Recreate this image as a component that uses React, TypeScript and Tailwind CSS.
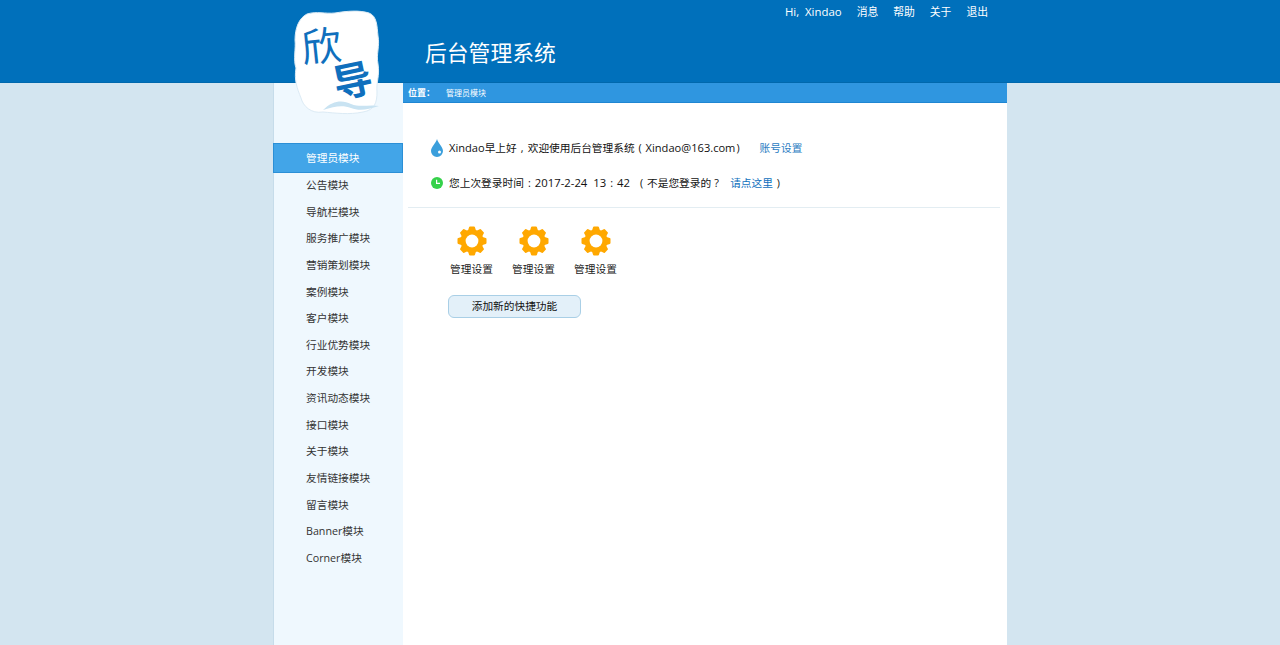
import React from 'react';

const FONT = "font-['Open_Sans','Noto_Sans_CJK_SC',sans-serif]";

const navItems = [
  '公告模块',
  '导航栏模块',
  '服务推广模块',
  '营销策划模块',
  '案例模块',
  '客户模块',
  '行业优势模块',
  '开发模块',
  '资讯动态模块',
  '接口模块',
  '关于模块',
  '友情链接模块',
  '留言模块',
  'Banner模块',
  'Corner模块'
];

function Logo() {
  return (
    <div className="absolute z-10 left-[20px] top-[10px] w-[88px] h-[106px]">
      <svg viewBox="0 0 88 106" className="absolute inset-0 w-full h-full">
        <path
          d="M14 4 C24 1 32 4 42 3 C54 1 66 0 76 3 C84 6 84 16 85 26 C87 36 83 44 85 54 C87 66 83 72 84 82 C84 92 82 100 70 102 C56 105 42 103 30 102 C18 104 10 96 8 88 C4 78 1 70 3 58 C0 50 3 38 2 30 C2 18 6 8 14 4 Z"
          fill="#ffffff"
          stroke="#dcebf5"
          strokeWidth="1"
        />
        <path
          d="M30 100 C40 90 50 90 58 94 C68 98 76 94 86 96 C74 100 66 101 58 98 C50 95 42 96 30 100 Z"
          fill="#c9e3f2"
        />
      </svg>
      <span className="absolute left-[8px] top-[14px] text-[#0f6fbd] text-[40px] leading-none font-['Noto_Sans_CJK_SC',sans-serif] -rotate-6">欣</span>
      <span className="absolute left-[40px] top-[49px] text-[#0f6fbd] text-[39px] leading-none font-['Noto_Sans_CJK_SC',sans-serif] font-bold -rotate-12">导</span>
    </div>
  );
}

function Gear() {
  const teeth = [0, 45, 90, 135, 180, 225, 270, 315];
  return (
    <svg viewBox="0 0 32 32" className="w-[32px] h-[32px]">
      {teeth.map((a) => (
        <polygon
          key={a}
          points="14,2.5 18,2.5 20,9 12,9"
          fill="#ffa800"
          stroke="#ffa800"
          strokeWidth="2"
          strokeLinejoin="round"
          transform={`rotate(${a} 16 16)`}
        />
      ))}
      <circle cx="16" cy="16" r="11.5" fill="#ffa800" />
      <circle cx="16" cy="16" r="6.4" fill="#ffffff" />
    </svg>
  );
}

function Drop() {
  return (
    <svg viewBox="0 0 12 18" className="w-[12px] h-[18px] shrink-0">
      <path d="M6 0 C7 4 12 8 12 12 A6 6 0 0 1 0 12 C0 8 5 4 6 0 Z" fill="#3b9fdc" />
      <circle cx="8.5" cy="13" r="1.5" fill="#ffffff" />
    </svg>
  );
}

function Clock() {
  return (
    <svg viewBox="0 0 12 12" className="w-[12px] h-[12px] shrink-0">
      <circle cx="6" cy="6" r="6" fill="#35d14a" />
      <path d="M5.6 2.8 V6.4 H9" stroke="#ffffff" strokeWidth="1.2" fill="none" />
    </svg>
  );
}

// punctuation sits centred in a full-width cell in the picture
function P({ children }: { children: React.ReactNode }) {
  return <span className="inline-block w-[11px] text-center">{children}</span>;
}

export default function App() {
  return (
    <div className={`${FONT} h-[645px] overflow-hidden bg-[#d3e5f0] flex flex-col`}>
      <header className="h-[83px] shrink-0 bg-[#0070bb] border-b border-[#0068ad]">
        <div className="w-[734px] mx-auto relative h-full">
          <Logo />
          <h1 className="absolute left-[152px] top-[38px] text-[21.8px] leading-[30px] font-normal text-white">后台管理系统</h1>
          <div className="absolute top-[3px] right-[19px] flex items-center text-[10.8px] leading-[17px] text-white">
            <span className="mr-[15px] whitespace-pre text-[11.4px]">Hi,  Xindao</span>
            <span className="mr-[15px]">消息</span>
            <span className="mr-[15px]">帮助</span>
            <span className="mr-[15px]">关于</span>
            <span>退出</span>
          </div>
        </div>
      </header>

      <div className="w-[734px] mx-auto flex-1 flex">
        <aside className="w-[130px] shrink-0 bg-[#eff8fe] border-l border-[#c6dcea] pt-[60px] text-[10.7px] text-[#333333]">
          <div className="h-[30px] -mb-px -ml-px bg-[#42a5e8] border border-[#2b8fd6] text-white flex items-center pl-[32px]">管理员模块</div>
          {navItems.map((item) => (
            <div key={item} className="h-[26.65px] leading-[26.65px] pl-[32px]">{item}</div>
          ))}
        </aside>

        <main className="flex-1 bg-white flex flex-col">
          <div className="h-[20px] bg-[#2f96e0] border-b border-[#1f86d2] flex items-center text-white pl-[5px]">
            <span className="font-bold w-[38px] text-[9px]">位置：</span>
            <span className="text-[8px]">管理员模块</span>
          </div>

          <section className="ml-[5px] mr-[7px] h-[105px] border-b border-[#e3edf2] pl-[23px] text-[10.7px] text-[#111111]">
            <div className="flex items-center mt-[35px] h-[20px]">
              <Drop />
              <span className="ml-[6px] whitespace-nowrap">
                <span className="text-[11.1px]">Xindao</span>早上好<P>,</P>欢迎使用后台管理系统<P>(</P>
                <span className="text-[11.1px]">Xindao@163.com</span>
                <span className="ml-px">)</span>
              </span>
              <span className="ml-[20px] text-[#2b7cc2]">账号设置</span>
            </div>
            <div className="flex items-center mt-[15px] h-[20px]">
              <Clock />
              <span className="ml-[6px] whitespace-pre">
                您上次登录时间<P>:</P>
                <span className="text-[11.3px]">2017-2-24  13</span>
                <P>:</P>
                <span className="text-[11.3px]">42</span>
                <span className="ml-[6px]"><P>(</P></span>不是您登录的<P>?</P>
              </span>
              <span className="ml-[8px] text-[#0f6fbd]">请点这里</span>
              <P>)</P>
            </div>
          </section>

          <section className="pl-[47px] pt-[17px]">
            <div className="flex gap-[19px]">
              {[0, 1, 2].map((i) => (
                <div key={i} className="w-[43px] flex flex-col items-center text-[10.7px] leading-[17px] text-[#222222]">
                  <Gear />
                  <span className="mt-[4px] whitespace-nowrap">管理设置</span>
                </div>
              ))}
            </div>
            <button className="mt-[17px] -ml-[2px] w-[133px] h-[23px] rounded-[6px] border border-[#a9cfe6] bg-[#e3f0f9] text-[10.7px] text-[#111111] flex items-center justify-center">
              添加新的快捷功能
            </button>
          </section>
        </main>
      </div>
    </div>
  );
}
